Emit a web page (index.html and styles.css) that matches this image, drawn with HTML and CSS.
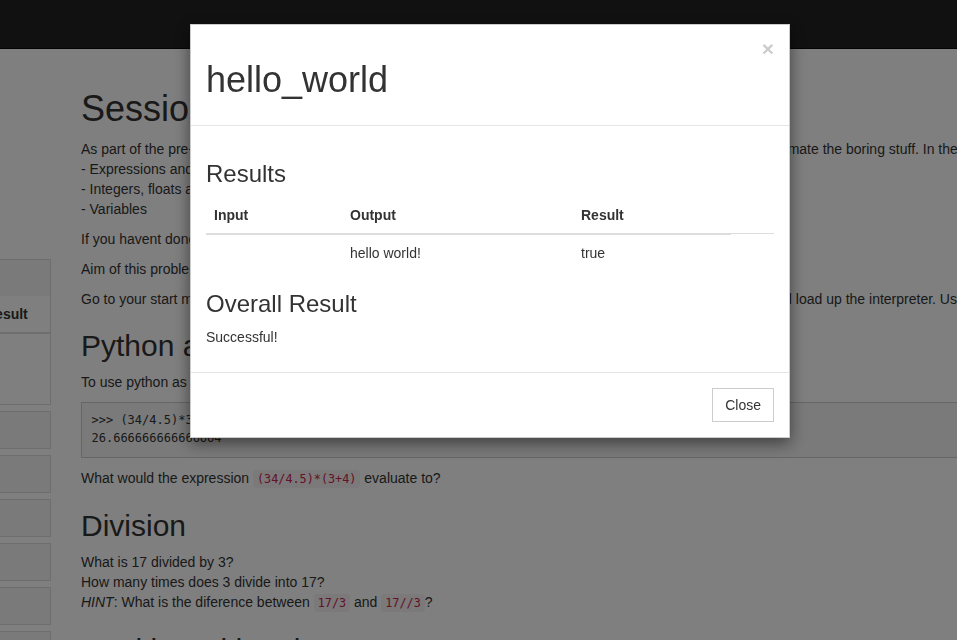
FILE: index.html
```html
<!DOCTYPE html>
<html lang="en">
<head>
<meta charset="utf-8">
<title>Session 1 - Python basics</title>
<link rel="stylesheet" href="styles.css">
</head>
<body>
<nav class="navbar"></nav>
<div class="page">
  <aside class="sidebar">
    <div class="panel">
      <div class="panel-heading"></div>
      <table class="side-table">
        <colgroup><col><col class="side-col-out"><col class="side-col-res"></colgroup>
        <thead><tr><th>Input</th><th>Output</th><th>Result</th></tr></thead>
        <tbody><tr><td class="side-empty"></td><td class="side-empty"></td><td class="side-empty"></td></tr></tbody>
      </table>
    </div>
    <div class="side-box"></div>
    <div class="side-box"></div>
    <div class="side-box"></div>
    <div class="side-box"></div>
    <div class="side-box"></div>
    <div class="side-box"></div>
  </aside>
  <main class="content">
    <h1>Session 1 - Introduction to Python</h1>
    <p>As part of the pre-session work we will all be looking at how the Python language would be used to help us to automate the boring stuff. In the session we will cover:<br>
    - Expressions and operators<br>
    - Integers, floats and strings<br>
    - Variables</p>
    <p>If you havent done so already, please install Python 3 before the session.</p>
    <p>Aim of this problem set is to get comfortable with the interpreter.</p>
    <p>Go to your start menu, search for Python 3.6, then open the program named IDLE from the search results. This will load up the interpreter. Use it to try out the examples below.</p>
    <h2>Python as a calculator</h2>
    <p>To use python as a calculator, type an expression and press enter:</p>
<pre>&gt;&gt;&gt; (34/4.5)*3+4
26.666666666666664</pre>
    <p>What would the expression <code>(34/4.5)*(3+4)</code> evaluate to?</p>
    <h2>Division</h2>
    <p>What is 17 divided by 3?<br>
    How many times does 3 divide into 17?<br>
    <em>HINT</em>: What is the diference between <code>17/3</code> and <code>17//3</code>?</p>
    <h2>Working with strings</h2>
    <p>Strings are pieces of text.</p>
  </main>
</div>

<div class="backdrop"></div>
<div class="modal" role="dialog">
  <div class="modal-header">
    <button class="close" type="button" aria-label="Close">&times;</button>
    <h1 class="modal-title">hello_world</h1>
  </div>
  <div class="modal-body">
    <h3>Results</h3>
    <table class="results">
      <colgroup><col class="c-in"><col class="c-out"><col class="c-res"><col class="c-extra"></colgroup>
      <thead><tr><th>Input</th><th>Output</th><th>Result</th></tr></thead>
      <tbody><tr><td></td><td>hello world!</td><td>true</td><td></td></tr></tbody>
    </table>
    <h3>Overall Result</h3>
    <p>Successful!</p>
  </div>
  <div class="modal-footer">
    <button class="btn" type="button">Close</button>
  </div>
</div>
</body>
</html>
```

FILE: styles.css
```css
html, body {
  margin: 0;
}
body {
  font-family: "Liberation Sans", Arial, Helvetica, sans-serif;
  font-size: 14px;
  line-height: 20px;
  color: #333;
  background: #fff;
  overflow: hidden;
  height: 640px;
}

.navbar {
  height: 48px;
  background: #222;
  border-bottom: 1px solid #080808;
}

.page {
  display: flex;
  align-items: flex-start;
  padding-top: 20px;
}

/* sidebar */
.sidebar {
  flex: 0 0 200px;
  margin-left: -149px;
  margin-top: 190px;
}
.panel {
  border: 1px solid #ddd;
  background: #fff;
}
.panel-heading {
  height: 36px;
  background: #f5f5f5;
}
.side-table {
  width: 100%;
  border-collapse: collapse;
  table-layout: fixed;
}
.side-col-out { width: 60px; }
.side-col-res { width: 73px; }
.side-table th {
  padding: 8px;
  text-align: left;
  font-weight: bold;
  white-space: nowrap;
  border-bottom: 2px solid #ddd;
  overflow: hidden;
}
.side-table .side-empty {
  height: 70px;
  padding: 0;
}
.side-box {
  box-sizing: border-box;
  height: 38px;
  margin-top: 6px;
  border: 1px solid #ddd;
  background: #f5f5f5;
}

/* content */
.content {
  flex: 0 0 1400px;
  margin-left: 30px;
}
h1, h2, h3 {
  font-family: inherit;
  font-weight: 500;
  line-height: 1.1;
  color: inherit;
  margin: 20px 0 10px;
}
h1 { font-size: 36px; }
h2 { font-size: 30px; }
h3 { font-size: 24px; }
p { margin: 0 0 10px; }
pre {
  margin: 0 0 10px;
  padding: 9.5px;
  border: 1px solid #ccc;
  background: #f5f5f5;
  font-family: "DejaVu Sans Mono", "Liberation Mono", monospace;
  font-size: 12px;
  line-height: 17.5px;
  color: #333;
}
code {
  font-family: "DejaVu Sans Mono", "Liberation Mono", monospace;
  font-size: 11.8px;
  padding: 2px 4px;
  color: #c7254e;
  background: #f9f2f4;
  border-radius: 4px;
}

/* modal */
.backdrop {
  position: fixed;
  top: 0;
  left: 0;
  right: 0;
  bottom: 0;
  background: rgba(0, 0, 0, 0.5);
}
.modal {
  position: fixed;
  top: 24px;
  left: 190px;
  width: 600px;
  box-sizing: border-box;
  background: #fff;
  border: 1px solid rgba(0, 0, 0, 0.2);
  box-shadow: 0 5px 15px rgba(0, 0, 0, 0.5);
}
.modal-header {
  padding: 15px;
  border-bottom: 1px solid #e5e5e5;
}
.modal-header::after {
  content: "";
  display: block;
  clear: both;
}
.modal-title {
  margin: 20px 0 10px;
}
.close {
  float: right;
  margin-top: -2px;
  padding: 0;
  border: 0;
  background: transparent;
  font-family: inherit;
  font-size: 21px;
  font-weight: bold;
  line-height: 1;
  color: #000;
  opacity: 0.2;
  text-shadow: 0 1px 0 #fff;
  cursor: pointer;
}
.modal-body {
  padding: 15px;
}
.results {
  width: 100%;
  border-collapse: collapse;
  table-layout: fixed;
  margin-bottom: 20px;
}
.c-in { width: 136px; }
.c-out { width: 231px; }
.c-res { width: 158px; }
.c-extra { width: 43px; }
.results th {
  padding: 8px;
  text-align: left;
  font-weight: bold;
  border-bottom: 2px solid #ddd;
}
.results td {
  padding: 8px;
  border-top: 1px solid #ddd;
}
.modal-footer {
  padding: 15px;
  text-align: right;
  border-top: 1px solid #e5e5e5;
}
.btn {
  display: inline-block;
  padding: 6px 12px;
  font-family: inherit;
  font-size: 14px;
  line-height: 20px;
  color: #333;
  background: #fff;
  border: 1px solid #ccc;
  border-radius: 0;
  cursor: pointer;
}
```
